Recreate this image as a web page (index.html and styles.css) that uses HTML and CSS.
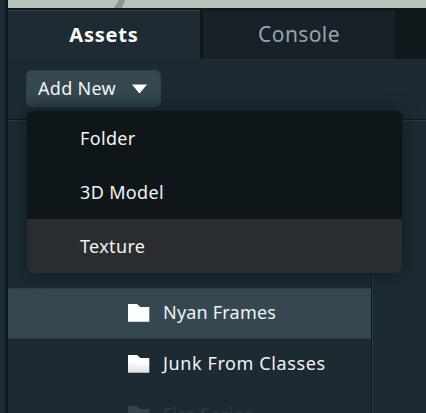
FILE: index.html
```html
<!DOCTYPE html>
<html lang="en">
<head>
<meta charset="utf-8">
<title>Assets</title>
<link rel="stylesheet" href="styles.css">
</head>
<body>
<div class="viewport">
  <svg class="scene" width="418" height="8"><path d="M106 8 L111 0 H117 L114 8Z" fill="#8c958e"/></svg>
</div>
<div class="panel">
  <nav class="tabs">
    <div class="tab active"><span class="t-assets">Assets</span></div>
    <div class="tab idle"><span class="t-console">Console</span></div>
  </nav>
  <div class="toolbar">
    <button class="add"><span class="t-add">Add New</span><svg width="17" height="10" viewBox="0 0 17 10"><path d="M1 .5H16L8.5 9.5Z" fill="#fff"/></svg></button>
    <div class="menu">
      <div class="item"><span class="t-folder">Folder</span></div>
      <div class="item"><span class="t-model">3D Model</span></div>
      <div class="item hover"><span class="t-texture">Texture</span></div>
    </div>
  </div>
  <div class="content">
    <div class="tree">
      <div class="row selected"><svg class="icon" width="22" height="18" viewBox="0 0 22 18"><path d="M0 0H9L12.5 3H21.3V17.7H0Z" fill="#fff"/></svg><span class="t-nyan">Nyan Frames</span></div>
      <div class="row"><svg class="icon" width="22" height="18" viewBox="0 0 22 18"><defs><linearGradient id="fade" x2="0" y2="1"><stop offset=".4" stop-color="#fff"/><stop offset="1" stop-color="#dde0e1"/></linearGradient></defs><path d="M0 0H9L12.5 3H21.3V17.7H0Z" fill="url(#fade)"/></svg><span class="t-junk">Junk From Classes</span></div>
      <div class="row faded"><svg class="icon" width="22" height="18" viewBox="0 0 22 18"><path d="M0 0H9L12.5 3H21.3V17.7H0Z" fill="#35434b"/></svg><span class="t-fire">Fire Series</span></div>
    </div>
    <div class="detail"></div>
  </div>
</div>
</body>
</html>
```
FILE: styles.css
```css
* { box-sizing: border-box; }
body {
  margin: 0;
  width: 426px;
  height: 413px;
  overflow: hidden;
  padding-left: 5px;
  background: #1c2b33;
  font-family: "Noto Sans", sans-serif;
  font-size: 18px;
  font-weight: 450;
  color: #f2f3f3;
}
span { white-space: nowrap; }
.viewport { height: 8px; background: #b9c3ba; border-left: 3px solid #0f181b; }
.scene { display: block; }
.panel { height: 405px; border-left: 3px solid #0f181b; display: flex; flex-direction: column; overflow: hidden; }
.tabs { height: 51px; flex: none; display: flex; background: #0f181b; padding-top: 2px; }
.tab { display: flex; align-items: center; justify-content: center; height: 49px; font-size: 20px; }
.active { width: 192px; padding-bottom: 2px; background: #1e2b33; border-top: 1px solid #34434c; color: #fff; font-weight: 700; letter-spacing: .8px; }
.idle { width: 192px; margin: 1px 0 0 3px; height: 48px; padding-bottom: 3px; background: #172127; color: #98a3ad; font-size: 21px; letter-spacing: .4px; }
.toolbar { position: relative; height: 61px; flex: none; padding: 11px 0 0 18px; border-bottom: 1px solid #0f181b; }
.add {
  width: 135px; height: 37px; display: flex; align-items: center; gap: 14px; padding: 0 0 0 11px;
  border: 1px solid #30424c; border-radius: 6px; background: linear-gradient(#354852 60%, #2c3e48); color: #f2f3f3; font: inherit;
}
.t-add { width: 79px; margin-top: -1px; letter-spacing: .3px; text-align: left; }
.menu {
  position: absolute; z-index: 2; left: 19px; top: 52px; width: 375px; height: 162px;
  overflow: hidden; border-radius: 6px; background: #0f1619; box-shadow: 0 1px 18px rgba(5, 14, 19, .6);
}
.item { height: 54px; display: flex; align-items: center; padding: 0 0 1px 53px; letter-spacing: .35px; }
.hover { background: #292d30; }
.content { flex: 1; min-height: 0; display: flex; border-top: 1px solid #2b3a43; }
.tree { width: 363px; padding-top: 167px; overflow: hidden; }
.row { height: 51px; display: flex; align-items: center; gap: 13px; padding: 0 0 3px 120px; letter-spacing: .2px; }
.icon { margin-top: 2px; }
.t-junk { letter-spacing: .6px; }
.t-fire { letter-spacing: .3px; }
.selected { background: #354852; border-top: 1px solid #2d404a; border-bottom: 1px solid #293b45; }
.faded { color: #2b3940; }
.detail { flex: 1; border-left: 1px solid #0f181b; box-shadow: inset 1px 0 #2b3a43; }
```
